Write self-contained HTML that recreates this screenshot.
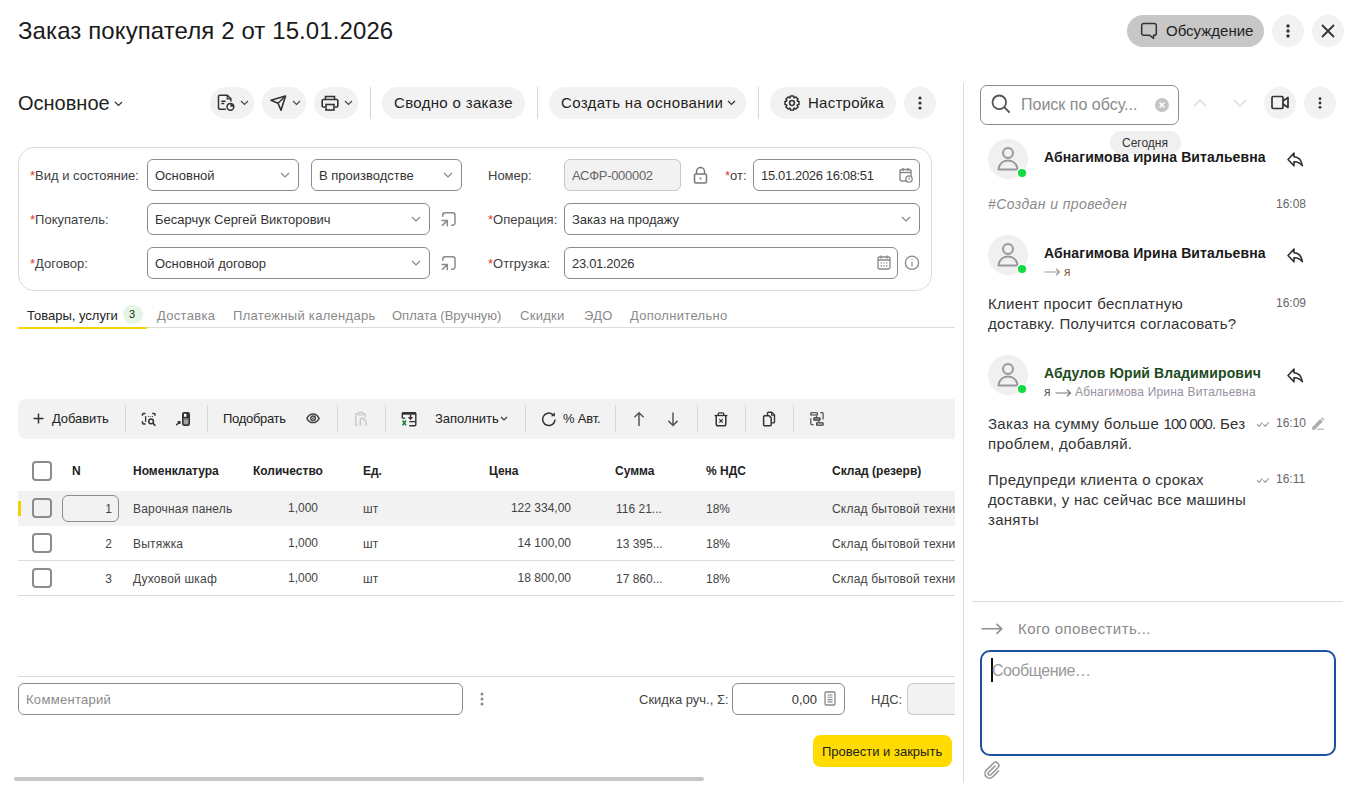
<!DOCTYPE html>
<html><head><meta charset="utf-8">
<style>
*{box-sizing:border-box;margin:0;padding:0}
html,body{width:1361px;height:795px;overflow:hidden;background:#fff;font-family:"Liberation Sans",sans-serif;color:#333}
.a{position:absolute}
.t{position:absolute;white-space:nowrap;line-height:1}
.pill{position:absolute;background:#f2f2f2;border-radius:16px}
.sep{position:absolute;width:1px;background:#d6d6d6}
.fld{position:absolute;border:1px solid #8c8c8c;border-radius:6px;background:#fff}
.lbl{position:absolute;white-space:nowrap;font-size:13px;color:#404040;line-height:1}
.req{color:#e5352b}
svg{position:absolute;overflow:visible}
</style></head><body>
<!-- title -->
<div class="t" style="left:18px;top:19px;font-size:24px;color:#1a1a1a;letter-spacing:0.1px">Заказ покупателя 2 от 15.01.2026</div>

<!-- top right -->
<div class="a" style="left:1127px;top:15px;width:137px;height:32px;border-radius:16px;background:#c7c7c7"></div>
<svg style="left:1141px;top:22px" width="17" height="18" viewBox="0 0 17 18"><path d="M2.6 1.5H13.4A1.9 1.9 0 0 1 15.3 3.4V11.4A1.9 1.9 0 0 1 13.4 13.3H12.6V16.3L8.6 13.3H2.6A1.9 1.9 0 0 1 0.7 11.4V3.4A1.9 1.9 0 0 1 2.6 1.5Z" fill="none" stroke="#333" stroke-width="1.5" stroke-linejoin="round"/></svg>
<div class="t" style="left:1166px;top:24px;font-size:15px;color:#222;top:23px">Обсуждение</div>
<div class="pill" style="left:1272px;top:15px;width:32px;height:32px"></div>
<svg style="left:1286px;top:24px" width="4" height="14"><circle cx="2" cy="2" r="1.7" fill="#333"/><circle cx="2" cy="7" r="1.7" fill="#333"/><circle cx="2" cy="12" r="1.7" fill="#333"/></svg>
<div class="pill" style="left:1312px;top:15px;width:32px;height:32px"></div>
<svg style="left:1321px;top:24px" width="14" height="14"><path d="M1 1L13 13M13 1L1 13" stroke="#333" stroke-width="1.8"/></svg>

<!-- panel divider -->
<div class="a" style="left:963px;top:83px;width:1px;height:700px;background:#dcdcdc"></div>

<!-- Основное -->
<div class="t" style="left:18px;top:93px;font-size:20px;color:#222">Основное</div>
<svg style="left:114px;top:101px" width="9" height="6"><path d="M1 1l3.5 3.5L8 1" fill="none" stroke="#333" stroke-width="1.2"/></svg>

<!-- toolbar -->
<div class="pill" style="left:210px;top:87px;width:44px;height:32px"></div>
<div class="pill" style="left:262px;top:87px;width:44px;height:32px"></div>
<div class="pill" style="left:314px;top:87px;width:44px;height:32px"></div>
<div class="sep" style="left:370px;top:87px;height:32px"></div>
<div class="pill" style="left:382px;top:87px;width:143px;height:32px"></div>
<div class="t" style="left:394px;top:95px;font-size:15px;color:#222;letter-spacing:0.33px">Сводно о заказе</div>
<div class="sep" style="left:537px;top:87px;height:32px"></div>
<div class="pill" style="left:549px;top:87px;width:197px;height:32px"></div>
<div class="t" style="left:561px;top:95px;font-size:15px;color:#222;letter-spacing:0.33px">Создать на основании</div>
<div class="sep" style="left:758px;top:87px;height:32px"></div>
<div class="pill" style="left:770px;top:87px;width:126px;height:32px"></div>
<div class="t" style="left:808px;top:95px;font-size:15px;color:#222;letter-spacing:0.25px">Настройка</div>
<div class="pill" style="left:904px;top:87px;width:32px;height:32px"></div>


<!-- toolbar icons -->
<svg style="left:217px;top:94px" width="18" height="18" viewBox="0 0 18 18"><path d="M8.8 15.2H2.7a1.2 1.2 0 0 1-1.2-1.2V2.4a1.2 1.2 0 0 1 1.2-1.2h7.6l3.6 3.6v2.6" fill="none" stroke="#333" stroke-width="1.5" stroke-linejoin="round"/><path d="M10.2 1.3v3.6h3.6" fill="none" stroke="#333" stroke-width="1.2"/><path d="M4.3 7.2h4.3M4.3 9.5h3" stroke="#333" stroke-width="1.4"/><circle cx="13.4" cy="12.8" r="3.4" fill="#f2f2f2" stroke="#333" stroke-width="1.5"/><path d="M13.4 12.8V9.9A2.9 2.9 0 0 1 16.3 12.8z" fill="#333"/></svg>
<svg style="left:240px;top:100px" width="9" height="6"><path d="M1 1l3.5 3.5L8 1" fill="none" stroke="#444" stroke-width="1.1"/></svg>
<svg style="left:270px;top:95px" width="17" height="16" viewBox="0 0 17 16"><path d="M1 5.3L15.5 1 11 15.2 8 8.3z" fill="none" stroke="#333" stroke-width="1.6" stroke-linejoin="round"/><path d="M8 8.3l7.5-7.3" stroke="#333" stroke-width="1.5"/></svg>
<svg style="left:292px;top:100px" width="9" height="6"><path d="M1 1l3.5 3.5L8 1" fill="none" stroke="#444" stroke-width="1.1"/></svg>
<svg style="left:321px;top:95px" width="18" height="16" viewBox="0 0 18 16"><path d="M4.5 4.5V1.5h9v3" fill="none" stroke="#333" stroke-width="1.6"/><path d="M4 12H2.2a1 1 0 0 1-1-1V5.5a1 1 0 0 1 1-1h13.6a1 1 0 0 1 1 1V11a1 1 0 0 1-1 1H14" fill="none" stroke="#333" stroke-width="1.6"/><rect x="5" y="9.5" width="8" height="5.5" fill="none" stroke="#333" stroke-width="1.6"/></svg>
<svg style="left:344px;top:100px" width="9" height="6"><path d="M1 1l3.5 3.5L8 1" fill="none" stroke="#444" stroke-width="1.1"/></svg>
<svg style="left:727px;top:100px" width="9" height="6"><path d="M1 1l3.5 3.5L8 1" fill="none" stroke="#333" stroke-width="1.2"/></svg>
<svg style="left:784px;top:95px" width="16" height="16" viewBox="0 0 16 16"><path d="M13.24 6.03 L15.03 6.43 L15.03 9.57 L13.24 9.97 L13.10 10.31 L14.08 11.86 L11.86 14.08 L10.31 13.10 L9.97 13.24 L9.57 15.03 L6.43 15.03 L6.03 13.24 L5.69 13.10 L4.14 14.08 L1.92 11.86 L2.90 10.31 L2.76 9.970 L0.97 9.57 L0.97 6.43 L2.76 6.03 L2.90 5.69 L1.92 4.14 L4.14 1.92 L5.69 2.90 L6.03 2.76 L6.43 0.97 L9.57 0.97 L9.97 2.76 L10.31 2.90 L11.86 1.92 L14.08 4.14 L13.10 5.69z" fill="none" stroke="#333" stroke-width="1.5" stroke-linejoin="round"/><circle cx="8" cy="8" r="2.4" fill="none" stroke="#333" stroke-width="1.5"/></svg>
<svg style="left:918px;top:96px" width="4" height="14"><circle cx="2" cy="2" r="1.6" fill="#333"/><circle cx="2" cy="7" r="1.6" fill="#333"/><circle cx="2" cy="12" r="1.6" fill="#333"/></svg>

<!-- form group -->
<div class="a" style="left:18px;top:147px;width:914px;height:144px;border:1px solid #dcdcdc;border-radius:16px"></div>


<!-- form fields -->
<div class="lbl" style="left:30px;top:169px"><span class="req">*</span>Вид и состояние:</div>
<div class="fld" style="left:147px;top:159px;width:152px;height:32px"></div>
<div class="t" style="left:155px;top:169px;font-size:13px;color:#333">Основной</div>
<svg style="left:280px;top:172px" width="10" height="6"><path d="M1 1l4 4 4-4" fill="none" stroke="#888" stroke-width="1.2"/></svg>
<div class="fld" style="left:311px;top:159px;width:151px;height:32px"></div>
<div class="t" style="left:319px;top:169px;font-size:13px;color:#333">В производстве</div>
<svg style="left:443px;top:172px" width="10" height="6"><path d="M1 1l4 4 4-4" fill="none" stroke="#888" stroke-width="1.2"/></svg>

<div class="lbl" style="left:30px;top:213px"><span class="req">*</span>Покупатель:</div>
<div class="fld" style="left:147px;top:203px;width:283px;height:32px"></div>
<div class="t" style="left:155px;top:213px;font-size:13px;color:#333">Бесарчук Сергей Викторович</div>
<svg style="left:411px;top:216px" width="10" height="6"><path d="M1 1l4 4 4-4" fill="none" stroke="#888" stroke-width="1.2"/></svg>
<svg style="left:440px;top:211px" width="17" height="17" viewBox="0 0 17 17"><path d="M2.7 5.7V4.2A2.5 2.5 0 0 1 5.2 1.7H12.5A2.5 2.5 0 0 1 15 4.2V11.8A2.5 2.5 0 0 1 12.5 14.3H11" fill="none" stroke="#8a8a8a" stroke-width="1.5"/><path d="M1.5 9.5H7.3V15.3M2 14.8L7.2 9.6" fill="none" stroke="#8a8a8a" stroke-width="1.5"/></svg>

<div class="lbl" style="left:30px;top:257px"><span class="req">*</span>Договор:</div>
<div class="fld" style="left:147px;top:247px;width:283px;height:32px"></div>
<div class="t" style="left:155px;top:257px;font-size:13px;color:#333">Основной договор</div>
<svg style="left:411px;top:260px" width="10" height="6"><path d="M1 1l4 4 4-4" fill="none" stroke="#888" stroke-width="1.2"/></svg>
<svg style="left:440px;top:255px" width="17" height="17" viewBox="0 0 17 17"><path d="M2.7 5.7V4.2A2.5 2.5 0 0 1 5.2 1.7H12.5A2.5 2.5 0 0 1 15 4.2V11.8A2.5 2.5 0 0 1 12.5 14.3H11" fill="none" stroke="#8a8a8a" stroke-width="1.5"/><path d="M1.5 9.5H7.3V15.3M2 14.8L7.2 9.6" fill="none" stroke="#8a8a8a" stroke-width="1.5"/></svg>

<div class="lbl" style="left:488px;top:169px">Номер:</div>
<div class="fld" style="left:564px;top:159px;width:117px;height:32px;background:#f2f2f2;border-color:#c8c8c8"></div>
<div class="t" style="left:572px;top:169px;font-size:13px;color:#666;letter-spacing:-0.3px">АСФР-000002</div>
<svg style="left:693px;top:166px" width="15" height="18" viewBox="0 0 15 18"><path d="M3.5 8V5.5a4 4 0 0 1 8 0V8" fill="none" stroke="#777" stroke-width="1.5"/><rect x="1.5" y="8" width="12" height="9" rx="1.5" fill="none" stroke="#777" stroke-width="1.5"/><path d="M7.5 11.5v2" stroke="#777" stroke-width="1.5"/></svg>
<div class="lbl" style="left:725px;top:169px"><span class="req">*</span>от:</div>
<div class="fld" style="left:753px;top:159px;width:167px;height:32px"></div>
<div class="t" style="left:761px;top:169px;font-size:13px;color:#333;letter-spacing:-0.35px">15.01.2026 16:08:51</div>
<svg style="left:899px;top:167px" width="14" height="16" viewBox="0 0 14 16"><rect x="1" y="2.5" width="11" height="11.5" rx="1.5" fill="none" stroke="#888" stroke-width="1.4"/><path d="M1 5.5h11M4 1v3M9 1v3" stroke="#888" stroke-width="1.4"/><circle cx="10" cy="12" r="3.2" fill="#fff" stroke="#888" stroke-width="1.3"/><path d="M10 10.3v1.9h1.3" fill="none" stroke="#888" stroke-width="1"/></svg>

<div class="lbl" style="left:488px;top:213px"><span class="req">*</span>Операция:</div>
<div class="fld" style="left:564px;top:203px;width:356px;height:32px"></div>
<div class="t" style="left:572px;top:213px;font-size:13px;color:#333">Заказ на продажу</div>
<svg style="left:901px;top:216px" width="10" height="6"><path d="M1 1l4 4 4-4" fill="none" stroke="#888" stroke-width="1.2"/></svg>

<div class="lbl" style="left:488px;top:257px"><span class="req">*</span>Отгрузка:</div>
<div class="fld" style="left:564px;top:247px;width:334px;height:32px"></div>
<div class="t" style="left:572px;top:257px;font-size:13px;color:#333;letter-spacing:-0.3px">23.01.2026</div>
<svg style="left:877px;top:255px" width="14" height="15" viewBox="0 0 14 15"><rect x="1" y="2" width="12" height="12" rx="1.5" fill="none" stroke="#888" stroke-width="1.3"/><path d="M1 5h12M4 0.5v3M10 0.5v3" stroke="#888" stroke-width="1.3"/><path d="M3.5 8h1.5M6.3 8h1.5M9 8h1.5M3.5 10.8h1.5M6.3 10.8h1.5M9 10.8h1.5" stroke="#888" stroke-width="1.2"/></svg>
<svg style="left:904px;top:255px" width="17" height="17" viewBox="0 0 17 17"><circle cx="8" cy="7.8" r="6.6" fill="none" stroke="#888" stroke-width="1.3"/><path d="M8 6.8v4.6" stroke="#999" stroke-width="1.4"/><path d="M7.3 4.5h1.4" stroke="#999" stroke-width="1.1"/></svg>

<!-- tab labels -->
<div class="t" style="left:27px;top:309px;font-size:13px;color:#222">Товары, услуги</div>
<div class="a" style="left:123px;top:305px;width:20px;height:19px;border-radius:10px;background:#e3f6e3"></div>
<div class="t" style="left:129px;top:309px;font-size:11px;color:#222">3</div>
<div class="t" style="left:157px;top:309px;font-size:13px;color:#8a8a8a;letter-spacing:0.3px">Доставка</div>
<div class="t" style="left:233px;top:309px;font-size:13px;color:#8a8a8a;letter-spacing:0.3px">Платежный календарь</div>
<div class="t" style="left:392px;top:309px;font-size:13px;color:#8a8a8a;letter-spacing:0px">Оплата (Вручную)</div>
<div class="t" style="left:520px;top:309px;font-size:13px;color:#8a8a8a;letter-spacing:0.3px">Скидки</div>
<div class="t" style="left:584px;top:309px;font-size:13px;color:#8a8a8a;letter-spacing:0.3px">ЭДО</div>
<div class="t" style="left:630px;top:309px;font-size:13px;color:#8a8a8a;letter-spacing:0.3px">Дополнительно</div>

<!-- tabs -->
<div class="a" style="left:18px;top:327px;width:937px;height:1px;background:#dcdcdc"></div>
<div class="a" style="left:18px;top:327px;width:129px;height:2px;background:#f7d300;border-radius:1px"></div>

<!-- table toolbar -->
<div class="a" style="left:18px;top:399px;width:937px;height:40px;background:#f2f2f2;border-radius:8px 0 0 8px"></div>


<!-- table toolbar content -->
<svg style="left:33px;top:413px" width="11" height="11"><path d="M5.5 0.5v10M0.5 5.5h10" stroke="#333" stroke-width="1.5"/></svg>
<div class="t" style="left:52px;top:412px;font-size:13px;color:#222;letter-spacing:-0.1px">Добавить</div>
<div class="sep" style="left:125px;top:405px;height:27px"></div>
<svg style="left:141px;top:411px" width="16" height="16" viewBox="0 0 16 16"><path d="M1.5 4.8V3.4a1 1 0 0 1 1-1h2M1.5 10.3v1.8a1 1 0 0 0 1 1h2M11.3 2.4h1.7a1 1 0 0 1 1 1v1.4" fill="none" stroke="#333" stroke-width="1.5"/><path d="M4.6 5.2v5.6" stroke="#333" stroke-width="1.3"/><path d="M7.2 5.5h0.9M9.2 5.5h0.9M11.2 5.5h0.9" stroke="#333" stroke-width="1"/><circle cx="10.1" cy="10.4" r="2.3" fill="none" stroke="#333" stroke-width="1.5"/><path d="M11.8 12.1l2.6 2.6" stroke="#333" stroke-width="1.6"/></svg>
<svg style="left:175px;top:411px" width="16" height="16" viewBox="0 0 16 16"><path d="M1.2 14.3l3.3-3.3M2.6 10.6h2.3v2.3" fill="none" stroke="#333" stroke-width="1.3"/><rect x="7.7" y="1.7" width="6.6" height="12.6" rx="1.6" fill="#777" stroke="#333" stroke-width="1.4"/><path d="M7.7 3.3a1.6 1.6 0 0 1 1.6-1.6h3.4a1.6 1.6 0 0 1 1.6 1.6v3.7H7.7z" fill="#333"/><rect x="9" y="2.8" width="2.4" height="3" fill="#fff"/><path d="M10 8.8v4M12 8.8v4" stroke="#ddd" stroke-width="0.9"/></svg>
<div class="sep" style="left:207px;top:405px;height:27px"></div>
<div class="t" style="left:223px;top:412px;font-size:13px;color:#222;letter-spacing:-0.3px">Подобрать</div>
<svg style="left:306px;top:413px" width="14" height="11" viewBox="0 0 14 11"><path d="M0.9 5.3C2.4 2.4 4.6 1 7 1s4.6 1.4 6.1 4.3C11.6 8.2 9.4 9.6 7 9.6S2.4 8.2 0.9 5.3z" fill="none" stroke="#444" stroke-width="1.5"/><circle cx="7" cy="5.3" r="2.3" fill="none" stroke="#444" stroke-width="1.5"/><circle cx="7" cy="5.3" r="0.9" fill="#444"/></svg>
<div class="sep" style="left:337px;top:405px;height:27px"></div>
<svg style="left:354px;top:411px" width="14" height="16" viewBox="0 0 14 16"><path d="M3.3 2.8H1.8v11.6h1.5M9.6 2.8h1.5v3.4" fill="none" stroke="#c6c6c6" stroke-width="1.3"/><rect x="4.2" y="1.3" width="4.6" height="2.6" rx="0.6" fill="none" stroke="#c6c6c6" stroke-width="1.3"/><path d="M6.3 14.8V8.3a0.8 0.8 0 0 1 0.8-0.8h2.2l2.8 3v4.3" fill="none" stroke="#c6c6c6" stroke-width="1.3"/></svg>
<div class="sep" style="left:385px;top:405px;height:27px"></div>
<svg style="left:401px;top:411px" width="16" height="16" viewBox="0 0 16 16"><path d="M1.3 7.5V2.6a1 1 0 0 1 1-1h11.5a1 1 0 0 1 1 1v11.1a1 1 0 0 1-1 1H8.2" fill="none" stroke="#333" stroke-width="1.4"/><path d="M1.3 2.5h13.5" stroke="#333" stroke-width="2.4"/><path d="M2 7.2h2.2" stroke="#333" stroke-width="1.3"/><path d="M9.5 3.8v4.2M7.6 6.2l1.9 1.9 1.9-1.9M8.2 10.6h6.4" fill="none" stroke="#333" stroke-width="1.4"/><path d="M1.6 9.5l3.4 4.8M5 9.5l-3.4 4.8" stroke="#1a7f3a" stroke-width="1.5"/></svg>
<div class="t" style="left:435px;top:412px;font-size:13px;color:#222">Заполнить</div>
<svg style="left:500px;top:416px" width="8" height="5"><path d="M1 1l3 3 3-3" fill="none" stroke="#333" stroke-width="1.1"/></svg>
<div class="sep" style="left:525px;top:405px;height:27px"></div>
<svg style="left:541px;top:411px" width="16" height="16" viewBox="0 0 16 16"><path d="M14 8.5A6.2 6.2 0 1 1 11.8 3.6" fill="none" stroke="#333" stroke-width="1.5"/><path d="M13.8 1.2v4h-4z" fill="#333"/></svg>
<div class="t" style="left:563px;top:412px;font-size:13px;color:#222;letter-spacing:-0.2px">% Авт.</div>
<div class="sep" style="left:615px;top:405px;height:27px"></div>
<svg style="left:633px;top:411px" width="12" height="16" viewBox="0 0 12 16"><path d="M6 15V2M1.4 6.3L6 1.7l4.6 4.6" fill="none" stroke="#555" stroke-width="1.5"/></svg>
<svg style="left:667px;top:411px" width="12" height="16" viewBox="0 0 12 16"><path d="M6 1.5v13M1.4 9.9L6 14.5l4.6-4.6" fill="none" stroke="#555" stroke-width="1.5"/></svg>
<div class="sep" style="left:697px;top:405px;height:27px"></div>
<svg style="left:714px;top:411px" width="14" height="16" viewBox="0 0 14 16"><path d="M0.6 4.5h12.8" stroke="#333" stroke-width="1.3"/><path d="M4.3 4.2V2.8a1 1 0 0 1 1-1h3.4a1 1 0 0 1 1 1v1.4" fill="none" stroke="#333" stroke-width="1.3"/><path d="M2.2 4.5v8.5a1.8 1.8 0 0 0 1.8 1.8h6a1.8 1.8 0 0 0 1.8-1.8V4.5" fill="none" stroke="#333" stroke-width="1.5"/><path d="M5.3 8.2l3.4 3.4M8.7 8.2l-3.4 3.4" stroke="#333" stroke-width="1.2"/></svg>
<div class="sep" style="left:745px;top:405px;height:27px"></div>
<svg style="left:762px;top:411px" width="14" height="16" viewBox="0 0 14 16"><path d="M5.5 4V2.3a1 1 0 0 1 1-1h3.2l2.8 2.8v6.8a1 1 0 0 1-1 1H9.8" fill="none" stroke="#333" stroke-width="1.4"/><path d="M9.6 1.4v2.8h2.8" fill="none" stroke="#333" stroke-width="1.1"/><path d="M2.6 4.8h4.5l2.1 2.1v6.8a1 1 0 0 1-1 1H2.6a1 1 0 0 1-1-1V5.8a1 1 0 0 1 1-1z" fill="none" stroke="#333" stroke-width="1.5"/></svg>
<div class="sep" style="left:793px;top:405px;height:27px"></div>
<svg style="left:809px;top:411px" width="16" height="16" viewBox="0 0 16 16"><rect x="1.85" y="1.75" width="6.5" height="2.3" rx="0.4" fill="#fff" stroke="#333" stroke-width="1.1"/><path d="M7.4 4.6V6.3M10 9.7V11.3" stroke="#333" stroke-width="1"/><rect x="4.85" y="6.85" width="6.2" height="2.3" rx="0.4" fill="#b8b8b8" stroke="#333" stroke-width="1.1"/><rect x="7.55" y="11.85" width="6.6" height="2.3" rx="0.4" fill="#fff" stroke="#333" stroke-width="1.1"/><path d="M11.2 1.6H13.3A0.8 0.8 0 0 1 14.1 2.4V8.6M1.8 7.2V12.8A0.8 0.8 0 0 0 2.6 13.6H4.6" fill="none" stroke="#555" stroke-width="1.3"/></svg>

<!-- table header -->
<div class="a" style="left:32px;top:461px;width:20px;height:20px;border:2px solid #8c8c8c;border-radius:4px"></div>
<div class="t" style="left:72px;top:465px;font-size:12px;font-weight:bold;color:#222">N</div>
<div class="t" style="left:133px;top:465px;font-size:12px;font-weight:bold;color:#222">Номенклатура</div>
<div class="t" style="left:253px;top:465px;font-size:12px;font-weight:bold;color:#222">Количество</div>
<div class="t" style="left:363px;top:465px;font-size:12px;font-weight:bold;color:#222">Ед.</div>
<div class="t" style="left:489px;top:465px;font-size:12px;font-weight:bold;color:#222">Цена</div>
<div class="t" style="left:615px;top:465px;font-size:12px;font-weight:bold;color:#222">Сумма</div>
<div class="t" style="left:706px;top:465px;font-size:12px;font-weight:bold;color:#222">% НДС</div>
<div class="t" style="left:832px;top:465px;font-size:12px;font-weight:bold;color:#222">Склад (резерв)</div>

<!-- table -->
<div class="a" style="left:18px;top:491px;width:937px;height:35px;background:#f2f2f2"></div>
<div class="a" style="left:18px;top:501px;width:3px;height:15px;background:#f5d000"></div>
<div class="a" style="left:18px;top:560px;width:937px;height:1px;background:#dcdcdc"></div>
<div class="a" style="left:18px;top:595px;width:937px;height:1px;background:#dcdcdc"></div>

<div class="a" style="left:62px;top:495px;width:57px;height:27px;border:1px solid #8c8c8c;border-radius:6px"></div>
<div class="a" style="left:32px;top:498px;width:20px;height:20px;border:2px solid #8c8c8c;border-radius:4px"></div>
<div class="t" style="left:62px;top:503px;width:50px;text-align:right;font-size:12px;color:#444">1</div>
<div class="t" style="left:133px;top:503px;font-size:12px;color:#444;letter-spacing:0.2px">Варочная панель</div>
<div class="t" style="left:218px;top:502px;width:100px;text-align:right;font-size:12px;color:#444">1,000</div>
<div class="t" style="left:363px;top:503px;font-size:12px;color:#444">шт</div>
<div class="t" style="left:421px;top:502px;width:150px;text-align:right;font-size:12px;color:#444">122 334,00</div>
<div class="t" style="left:616px;top:503px;font-size:12px;color:#444">116 21...</div>
<div class="t" style="left:706px;top:503px;font-size:12px;color:#444">18%</div>
<div class="a" style="left:832px;top:500px;width:123px;height:16px;overflow:hidden"><div class="t" style="left:0;top:3px;font-size:12px;color:#444;letter-spacing:0.2px">Склад бытовой техники</div></div>
<div class="a" style="left:32px;top:533px;width:20px;height:20px;border:2px solid #8c8c8c;border-radius:4px"></div>
<div class="t" style="left:62px;top:538px;width:50px;text-align:right;font-size:12px;color:#444">2</div>
<div class="t" style="left:133px;top:538px;font-size:12px;color:#444;letter-spacing:0.2px">Вытяжка</div>
<div class="t" style="left:218px;top:537px;width:100px;text-align:right;font-size:12px;color:#444">1,000</div>
<div class="t" style="left:363px;top:538px;font-size:12px;color:#444">шт</div>
<div class="t" style="left:421px;top:537px;width:150px;text-align:right;font-size:12px;color:#444">14 100,00</div>
<div class="t" style="left:616px;top:538px;font-size:12px;color:#444">13 395...</div>
<div class="t" style="left:706px;top:538px;font-size:12px;color:#444">18%</div>
<div class="a" style="left:832px;top:535px;width:123px;height:16px;overflow:hidden"><div class="t" style="left:0;top:3px;font-size:12px;color:#444;letter-spacing:0.2px">Склад бытовой техники</div></div>
<div class="a" style="left:32px;top:568px;width:20px;height:20px;border:2px solid #8c8c8c;border-radius:4px"></div>
<div class="t" style="left:62px;top:573px;width:50px;text-align:right;font-size:12px;color:#444">3</div>
<div class="t" style="left:133px;top:573px;font-size:12px;color:#444;letter-spacing:0.2px">Духовой шкаф</div>
<div class="t" style="left:218px;top:572px;width:100px;text-align:right;font-size:12px;color:#444">1,000</div>
<div class="t" style="left:363px;top:573px;font-size:12px;color:#444">шт</div>
<div class="t" style="left:421px;top:572px;width:150px;text-align:right;font-size:12px;color:#444">18 800,00</div>
<div class="t" style="left:616px;top:573px;font-size:12px;color:#444">17 860...</div>
<div class="t" style="left:706px;top:573px;font-size:12px;color:#444">18%</div>
<div class="a" style="left:832px;top:570px;width:123px;height:16px;overflow:hidden"><div class="t" style="left:0;top:3px;font-size:12px;color:#444;letter-spacing:0.2px">Склад бытовой техники</div></div>

<!-- footer -->
<div class="a" style="left:18px;top:676px;width:937px;height:1px;background:#dcdcdc"></div>
<div class="fld" style="left:18px;top:683px;width:445px;height:32px"></div>
<div class="t" style="left:26px;top:693px;font-size:13px;color:#8a8a8a;letter-spacing:0.3px">Комментарий</div>
<svg style="left:480px;top:692px" width="4" height="14"><circle cx="2" cy="2" r="1.5" fill="#888"/><circle cx="2" cy="7" r="1.5" fill="#888"/><circle cx="2" cy="12" r="1.5" fill="#888"/></svg>
<div class="t" style="left:639px;top:693px;font-size:13px;color:#444">Скидка руч., Σ:</div>
<div class="fld" style="left:732px;top:683px;width:113px;height:32px"></div>
<div class="t" style="left:760px;top:693px;width:57px;text-align:right;font-size:13px;color:#333">0,00</div>
<svg style="left:824px;top:691px" width="12" height="15" viewBox="0 0 12 15"><rect x="1" y="1" width="10" height="13" rx="1" fill="none" stroke="#888" stroke-width="1.3"/><path d="M3.5 4h5M3.5 6.3h5M3.5 8.6h5M3.5 10.9h5" stroke="#888" stroke-width="1.1"/></svg>
<div class="t" style="left:871px;top:693px;font-size:13px;color:#444">НДС:</div>
<div class="a" style="left:907px;top:683px;width:48px;height:32px;border:1px solid #c8c8c8;border-right:none;border-radius:6px 0 0 6px;background:#f2f2f2"></div>
<div class="a" style="left:813px;top:735px;width:139px;height:32px;background:#ffdb00;border-radius:8px"></div>
<div class="t" style="left:822px;top:745px;font-size:13px;color:#222">Провести и закрыть</div>
<div class="a" style="left:14px;top:777px;width:690px;height:4px;background:#c6c6c6;border-radius:2px"></div>

<!-- right panel -->
<div class="fld" style="left:980px;top:85px;width:199px;height:40px;border-radius:7px"></div>
<div class="t" style="left:1021px;top:97px;font-size:16px;color:#8a8a8a">Поиск по обсу...</div>
<div class="pill" style="left:1264px;top:87px;width:32px;height:32px"></div>
<div class="pill" style="left:1304px;top:87px;width:32px;height:32px"></div>


<!-- right panel icons -->
<svg style="left:991px;top:94px" width="20" height="20" viewBox="0 0 20 20"><circle cx="8.3" cy="8.3" r="6.8" fill="none" stroke="#555" stroke-width="1.8"/><path d="M13.2 13.2l5.5 5.5" stroke="#555" stroke-width="1.9"/></svg>
<svg style="left:1155px;top:98px" width="14" height="14" viewBox="0 0 14 14"><circle cx="7" cy="7" r="7" fill="#c4c4c4"/><path d="M4.5 4.5l5 5M9.5 4.5l-5 5" stroke="#fff" stroke-width="1.6"/></svg>
<svg style="left:1193px;top:99px" width="14" height="8"><path d="M1 7l6-6 6 6" fill="none" stroke="#e3e3e3" stroke-width="1.9"/></svg>
<svg style="left:1233px;top:99px" width="14" height="8"><path d="M1 1l6 6 6-6" fill="none" stroke="#e3e3e3" stroke-width="1.9"/></svg>
<svg style="left:1271px;top:95px" width="18" height="15" viewBox="0 0 18 15"><rect x="1" y="1.5" width="11" height="12" rx="1.2" fill="none" stroke="#333" stroke-width="1.7"/><path d="M12 6l5-3.5v10L12 9" fill="none" stroke="#333" stroke-width="1.7" stroke-linejoin="round"/></svg>
<svg style="left:1318px;top:97px" width="4" height="12"><circle cx="2" cy="1.7" r="1.4" fill="#333"/><circle cx="2" cy="6" r="1.4" fill="#333"/><circle cx="2" cy="10.3" r="1.4" fill="#333"/></svg>

<!-- messages -->
<svg style="left:988px;top:139px" width="40" height="40" viewBox="0 0 40 40"><circle cx="20" cy="20" r="20" fill="#f0f0f0"/><circle cx="20" cy="14" r="5" fill="none" stroke="#999" stroke-width="2"/><path d="M10.5 30.5A9.5 9 0 0 1 29.5 30.5Z" fill="none" stroke="#999" stroke-width="2" stroke-linejoin="round"/><circle cx="34" cy="34" r="5.5" fill="#fff"/><circle cx="34" cy="34" r="4.1" fill="#13d943"/></svg>
<div class="t" style="left:1044px;top:150px;font-size:14px;font-weight:bold;color:#1a1a1a;letter-spacing:0.1px">Абнагимова Ирина Витальевна</div>
<div class="a" style="left:1110px;top:131px;width:71px;height:23px;border-radius:11px;background:#f0f0f0"></div>
<div class="t" style="left:1122px;top:137px;font-size:12px;color:#333">Сегодня</div>
<svg style="left:1287px;top:151.5px" width="17" height="15" viewBox="0 0 17 15"><path d="M7 1L1 7.5 7 13.8V9.8C10.5 9.5 13 11 15.3 13.6 14.5 8 11 5 7 4.8Z" fill="none" stroke="#333" stroke-width="1.6" stroke-linejoin="round"/></svg><div class="t" style="left:988px;top:197px;font-size:14px;font-style:italic;color:#8a8a8a;letter-spacing:0.4px">#Создан и проведен</div>
<div class="t" style="left:1276px;top:198px;font-size:12px;color:#666">16:08</div>
<svg style="left:988px;top:235px" width="40" height="40" viewBox="0 0 40 40"><circle cx="20" cy="20" r="20" fill="#f0f0f0"/><circle cx="20" cy="14" r="5" fill="none" stroke="#999" stroke-width="2"/><path d="M10.5 30.5A9.5 9 0 0 1 29.5 30.5Z" fill="none" stroke="#999" stroke-width="2" stroke-linejoin="round"/><circle cx="34" cy="34" r="5.5" fill="#fff"/><circle cx="34" cy="34" r="4.1" fill="#13d943"/></svg>
<div class="t" style="left:1044px;top:246px;font-size:14px;font-weight:bold;color:#1a1a1a;letter-spacing:0.1px">Абнагимова Ирина Витальевна</div>
<svg style="left:1287px;top:247.5px" width="17" height="15" viewBox="0 0 17 15"><path d="M7 1L1 7.5 7 13.8V9.8C10.5 9.5 13 11 15.3 13.6 14.5 8 11 5 7 4.8Z" fill="none" stroke="#333" stroke-width="1.6" stroke-linejoin="round"/></svg><svg style="left:1044px;top:268px" width="18" height="8"><path d="M0.5 4h15M12 0.8L15.5 4 12 7.2" fill="none" stroke="#999" stroke-width="1.2"/></svg>
<div class="t" style="left:1064px;top:266px;font-size:12px;color:#8a5a3a">я</div>
<div class="t" style="left:988px;top:294px;font-size:15px;color:#333;line-height:20px;letter-spacing:0.28px">Клиент просит бесплатную<br>доставку. Получится согласовать?</div>
<div class="t" style="left:1276px;top:297px;font-size:12px;color:#666">16:09</div>
<svg style="left:988px;top:355px" width="40" height="40" viewBox="0 0 40 40"><circle cx="20" cy="20" r="20" fill="#f0f0f0"/><circle cx="20" cy="14" r="5" fill="none" stroke="#999" stroke-width="2"/><path d="M10.5 30.5A9.5 9 0 0 1 29.5 30.5Z" fill="none" stroke="#999" stroke-width="2" stroke-linejoin="round"/><circle cx="34" cy="34" r="5.5" fill="#fff"/><circle cx="34" cy="34" r="4.1" fill="#13d943"/></svg>
<div class="t" style="left:1044px;top:366px;font-size:14px;font-weight:bold;color:#1d4a1d;letter-spacing:0.1px">Абдулов Юрий Владимирович</div>
<svg style="left:1287px;top:367.5px" width="17" height="15" viewBox="0 0 17 15"><path d="M7 1L1 7.5 7 13.8V9.8C10.5 9.5 13 11 15.3 13.6 14.5 8 11 5 7 4.8Z" fill="none" stroke="#333" stroke-width="1.6" stroke-linejoin="round"/></svg><div class="t" style="left:1044px;top:386px;font-size:12px;color:#555">я</div>
<svg style="left:1055px;top:389px" width="18" height="8"><path d="M0.5 4h15M12 0.8L15.5 4 12 7.2" fill="none" stroke="#777" stroke-width="1.2"/></svg>
<div class="t" style="left:1075px;top:386px;font-size:12px;color:#9a8fa0;letter-spacing:0.2px">Абнагимова Ирина Витальевна</div>
<div class="t" style="left:988px;top:414px;font-size:15px;color:#333;line-height:20px;letter-spacing:0.28px">Заказ на сумму больше <span style="letter-spacing:-0.8px">100 000.</span> Без<br>проблем, добавляй.</div>
<svg style="left:1256px;top:421px" width="14" height="7" viewBox="0 0 14 7"><path d="M1 3.2L3 5.3 6.5 1.3M7.3 3.2L9.3 5.3 12.8 1.3" fill="none" stroke="#a0a0a0" stroke-width="1.2"/></svg>
<div class="t" style="left:1276px;top:417px;font-size:12px;color:#666">16:10</div>
<svg style="left:1311px;top:417px" width="14" height="14" viewBox="0 0 14 14"><path d="M1 12.7L1.2 10.2 9.3 2.1 11.8 4.6 3.7 12.7Z" fill="#adadad"/><path d="M10.1 1.3L11.2 0.2 13.7 2.7 12.6 3.8Z" fill="#adadad"/><path d="M6.3 12.2h6.5" stroke="#adadad" stroke-width="1.1"/></svg>
<div class="t" style="left:988px;top:470px;font-size:15px;color:#333;line-height:20px;letter-spacing:0.28px">Предупреди клиента о сроках<br>доставки, у нас сейчас все машины<br>заняты</div>
<svg style="left:1256px;top:477px" width="14" height="7" viewBox="0 0 14 7"><path d="M1 3.2L3 5.3 6.5 1.3M7.3 3.2L9.3 5.3 12.8 1.3" fill="none" stroke="#a0a0a0" stroke-width="1.2"/></svg>
<div class="t" style="left:1276px;top:473px;font-size:12px;color:#666">16:11</div>
<svg style="left:981px;top:623px" width="23" height="12" viewBox="0 0 23 12"><path d="M0.5 5.8h20.5M15.5 0.8l5.2 5-5.2 5" fill="none" stroke="#8f8f8f" stroke-width="1.6"/></svg>
<div class="a" style="left:991px;top:658px;width:2px;height:24px;background:#111"></div>
<svg style="left:983px;top:761px" width="18" height="18" viewBox="0 0 18 18"><path d="M12.5 4.5L5.5 11.5a1.6 1.6 0 0 0 2.3 2.3l7.3-7.3a3.2 3.2 0 0 0-4.5-4.5L3.2 9.4a4.6 4.6 0 0 0 6.5 6.5L16 9.5" fill="none" stroke="#999" stroke-width="1.6"/></svg>

<div class="a" style="left:972px;top:601px;width:371px;height:1px;background:#dcdcdc"></div>
<div class="t" style="left:1018px;top:621px;font-size:15px;color:#8a8a8a;letter-spacing:0.4px">Кого оповестить...</div>
<div class="a" style="left:980px;top:650px;width:356px;height:106px;border:2px solid #1c4f9c;border-radius:10px"></div>
<div class="t" style="left:992px;top:663px;font-size:16px;color:#9a9a9a;letter-spacing:-0.45px">Сообщение…</div>
</body></html>
